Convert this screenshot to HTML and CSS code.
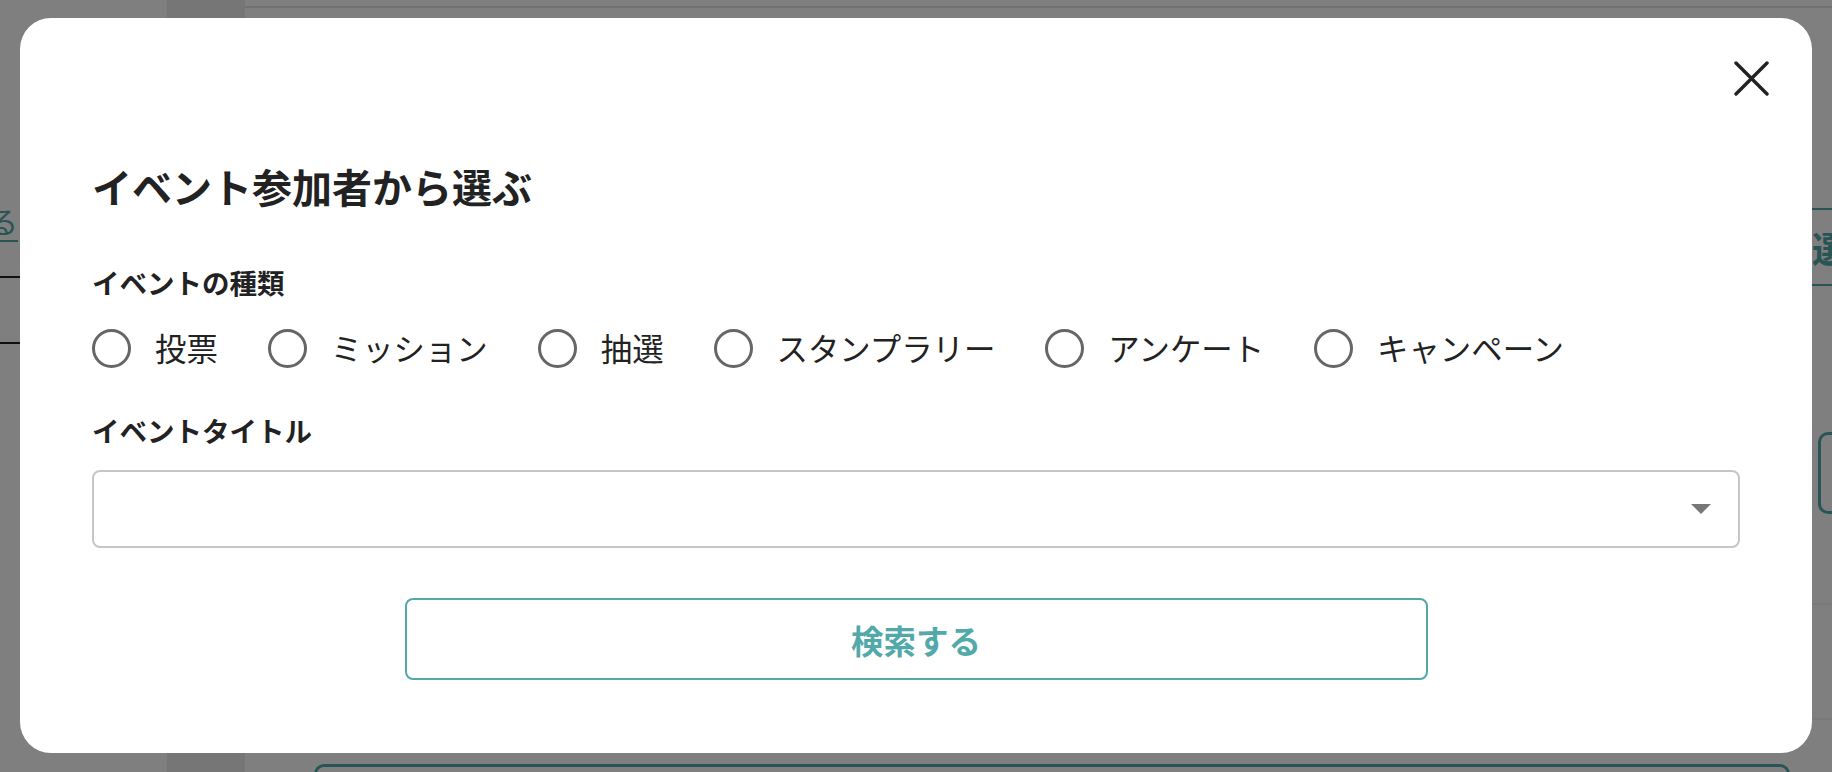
FILE: index.html
```html
<!DOCTYPE html>
<html lang="ja">
<head>
    <meta charset="UTF-8">
    <meta name="viewport" content="width=device-width, initial-scale=1.0">
    <title>イベント参加者から選ぶ</title>
    <link rel="stylesheet" href="styles.css">
</head>
<body>

    <div class="page">
        <div class="side">
            <div class="side-cut">
                <a class="side-link" href="#">一括で選択する</a>
            </div>
            <div class="side-rule"></div>
            <div class="side-rule second"></div>
        </div>
        <div class="rail"></div>
        <div class="main">
            <div class="main-top"></div>
            <div class="main-body">
                <div class="main-left">
                    <div class="list-box"></div>
                </div>
                <div class="tools">
                    <div class="pick-btn">選択する</div>
                    <div class="tools-box"></div>
                    <div class="tools-rule"></div>
                    <div class="tools-rule low"></div>
                </div>
            </div>
        </div>
    </div>

    <div class="overlay">
        <div class="modal">
            <button class="close-btn" type="button" aria-label="閉じる">
                <svg width="35" height="35" viewBox="0 0 35 35">
                    <path d="M2 2 L33 33 M33 2 L2 33" stroke="#222" stroke-width="3.4" stroke-linecap="round" fill="none"/>
                </svg>
            </button>

            <h2 class="modal-title">イベント参加者から選ぶ</h2>

            <div class="field-label">イベントの種類</div>
            <div class="options">
                <label class="option"><input type="radio" name="kind"><span>投票</span></label>
                <label class="option"><input type="radio" name="kind"><span>ミッション</span></label>
                <label class="option"><input type="radio" name="kind"><span>抽選</span></label>
                <label class="option"><input type="radio" name="kind"><span>スタンプラリー</span></label>
                <label class="option"><input type="radio" name="kind"><span>アンケート</span></label>
                <label class="option"><input type="radio" name="kind"><span>キャンペーン</span></label>
            </div>

            <div class="field-label second">イベントタイトル</div>
            <div class="select-box">
                <select class="select-input">
                    <option></option>
                </select>
                <span class="caret"></span>
            </div>

            <div class="actions">
                <button class="search-btn" type="button">検索する</button>
            </div>
        </div>
    </div>

</body>
</html>
```

FILE: styles.css
```css
html, body {
    margin: 0;
    height: 100%;
    overflow: hidden;
}

body {
    font-family: "Noto Sans CJK JP", "Noto Sans", sans-serif;
    color: #222;
    background-color: #fff;
}

/* page behind the dialog */
.page {
    display: grid;
    grid-template-columns: 167px 78px 1fr;
    height: 772px;
    width: 1832px;
}

.side {
    padding-top: 200px;
}

.side-cut {
    width: 18px;
    display: flex;
    justify-content: flex-end;
}

.side-link {
    white-space: nowrap;
    font-size: 30px;
    line-height: 40px;
    color: #4fa9a9;
    text-decoration: none;
    border-bottom: 2px solid #4fa9a9;
}

.side-rule {
    margin-top: 34px;
    width: 30px;
    border-top: 2px solid #222;
}

.side-rule.second {
    margin-top: 64px;
}

.rail {
    background-color: #ececec;
}

.main-top {
    height: 6px;
    border-bottom: 2px solid #e2e2e2;
}

.main-body {
    display: flex;
}

.main-left {
    flex: 1;
}

.list-box {
    margin: 756px 0 0 69px;
    height: 60px;
    border: 3px solid #52a9aa;
    border-radius: 10px;
}

.tools {
    width: 42px;
}

.pick-btn {
    margin-top: 200px;
    width: 220px;
    height: 78px;
    box-sizing: border-box;
    padding-left: 22px;
    border-top: 2px solid #52a9aa;
    border-bottom: 2px solid #52a9aa;
    color: #52a9aa;
    font-size: 36px;
    font-weight: 700;
    line-height: 74px;
    white-space: nowrap;
}

.tools-box {
    margin: 146px 0 0 28px;
    width: 200px;
    height: 82px;
    box-sizing: border-box;
    border: 3px solid #52a9aa;
    border-radius: 10px;
}

.tools-rule {
    margin-top: 89px;
    width: 200px;
    border-top: 2px solid #f4f4f4;
}

.tools-rule.low {
    margin-top: 113px;
}

/* dialog */
.overlay {
    position: fixed;
    inset: 0;
    padding: 18px 20px 19px;
    background-color: rgba(0, 0, 0, 0.5);
}

.modal {
    position: relative;
    height: 735px;
    box-sizing: border-box;
    padding: 138px 72px 0;
    background-color: #fff;
    border-radius: 31px;
}

.close-btn {
    position: absolute;
    top: 43px;
    right: 43px;
    width: 35px;
    height: 35px;
    padding: 0;
    border: none;
    background: none;
    cursor: pointer;
}

.close-btn svg {
    display: block;
}

.modal-title {
    margin: 0;
    font-size: 40px;
    line-height: 60px;
    font-weight: 700;
    color: #222;
}

.field-label {
    margin-top: 46px;
    font-size: 27.5px;
    line-height: 40px;
    font-weight: 600;
    color: #222;
}

.field-label.second {
    margin-top: 42px;
}

.options {
    margin-top: 26px;
    display: flex;
    gap: 50px;
}

.option {
    display: flex;
    align-items: center;
    gap: 24px;
    font-size: 31.4px;
    line-height: 40px;
    color: #222;
    cursor: pointer;
}

.option input {
    appearance: none;
    margin: 0;
    width: 39px;
    height: 39px;
    box-sizing: border-box;
    border: 3px solid #666;
    border-radius: 50%;
    background-color: #fff;
}

.select-box {
    margin-top: 20px;
    height: 78px;
    box-sizing: border-box;
    display: flex;
    align-items: center;
    padding-right: 27px;
    border: 2px solid #c6c6c6;
    border-radius: 8px;
}

.select-input {
    flex: 1;
    height: 100%;
    appearance: none;
    border: none;
    background: transparent;
    font-family: inherit;
    font-size: 28px;
    outline: none;
}

.caret {
    width: 0;
    height: 0;
    border-left: 10px solid transparent;
    border-right: 10px solid transparent;
    border-top: 10px solid #777;
}

.actions {
    margin-top: 50px;
    display: flex;
    justify-content: center;
}

.search-btn {
    width: 1023px;
    height: 82px;
    border: 2px solid #52a9aa;
    border-radius: 8px;
    background-color: #fff;
    color: #52a9aa;
    font-family: inherit;
    font-size: 32.5px;
    font-weight: 700;
    cursor: pointer;
}
```
